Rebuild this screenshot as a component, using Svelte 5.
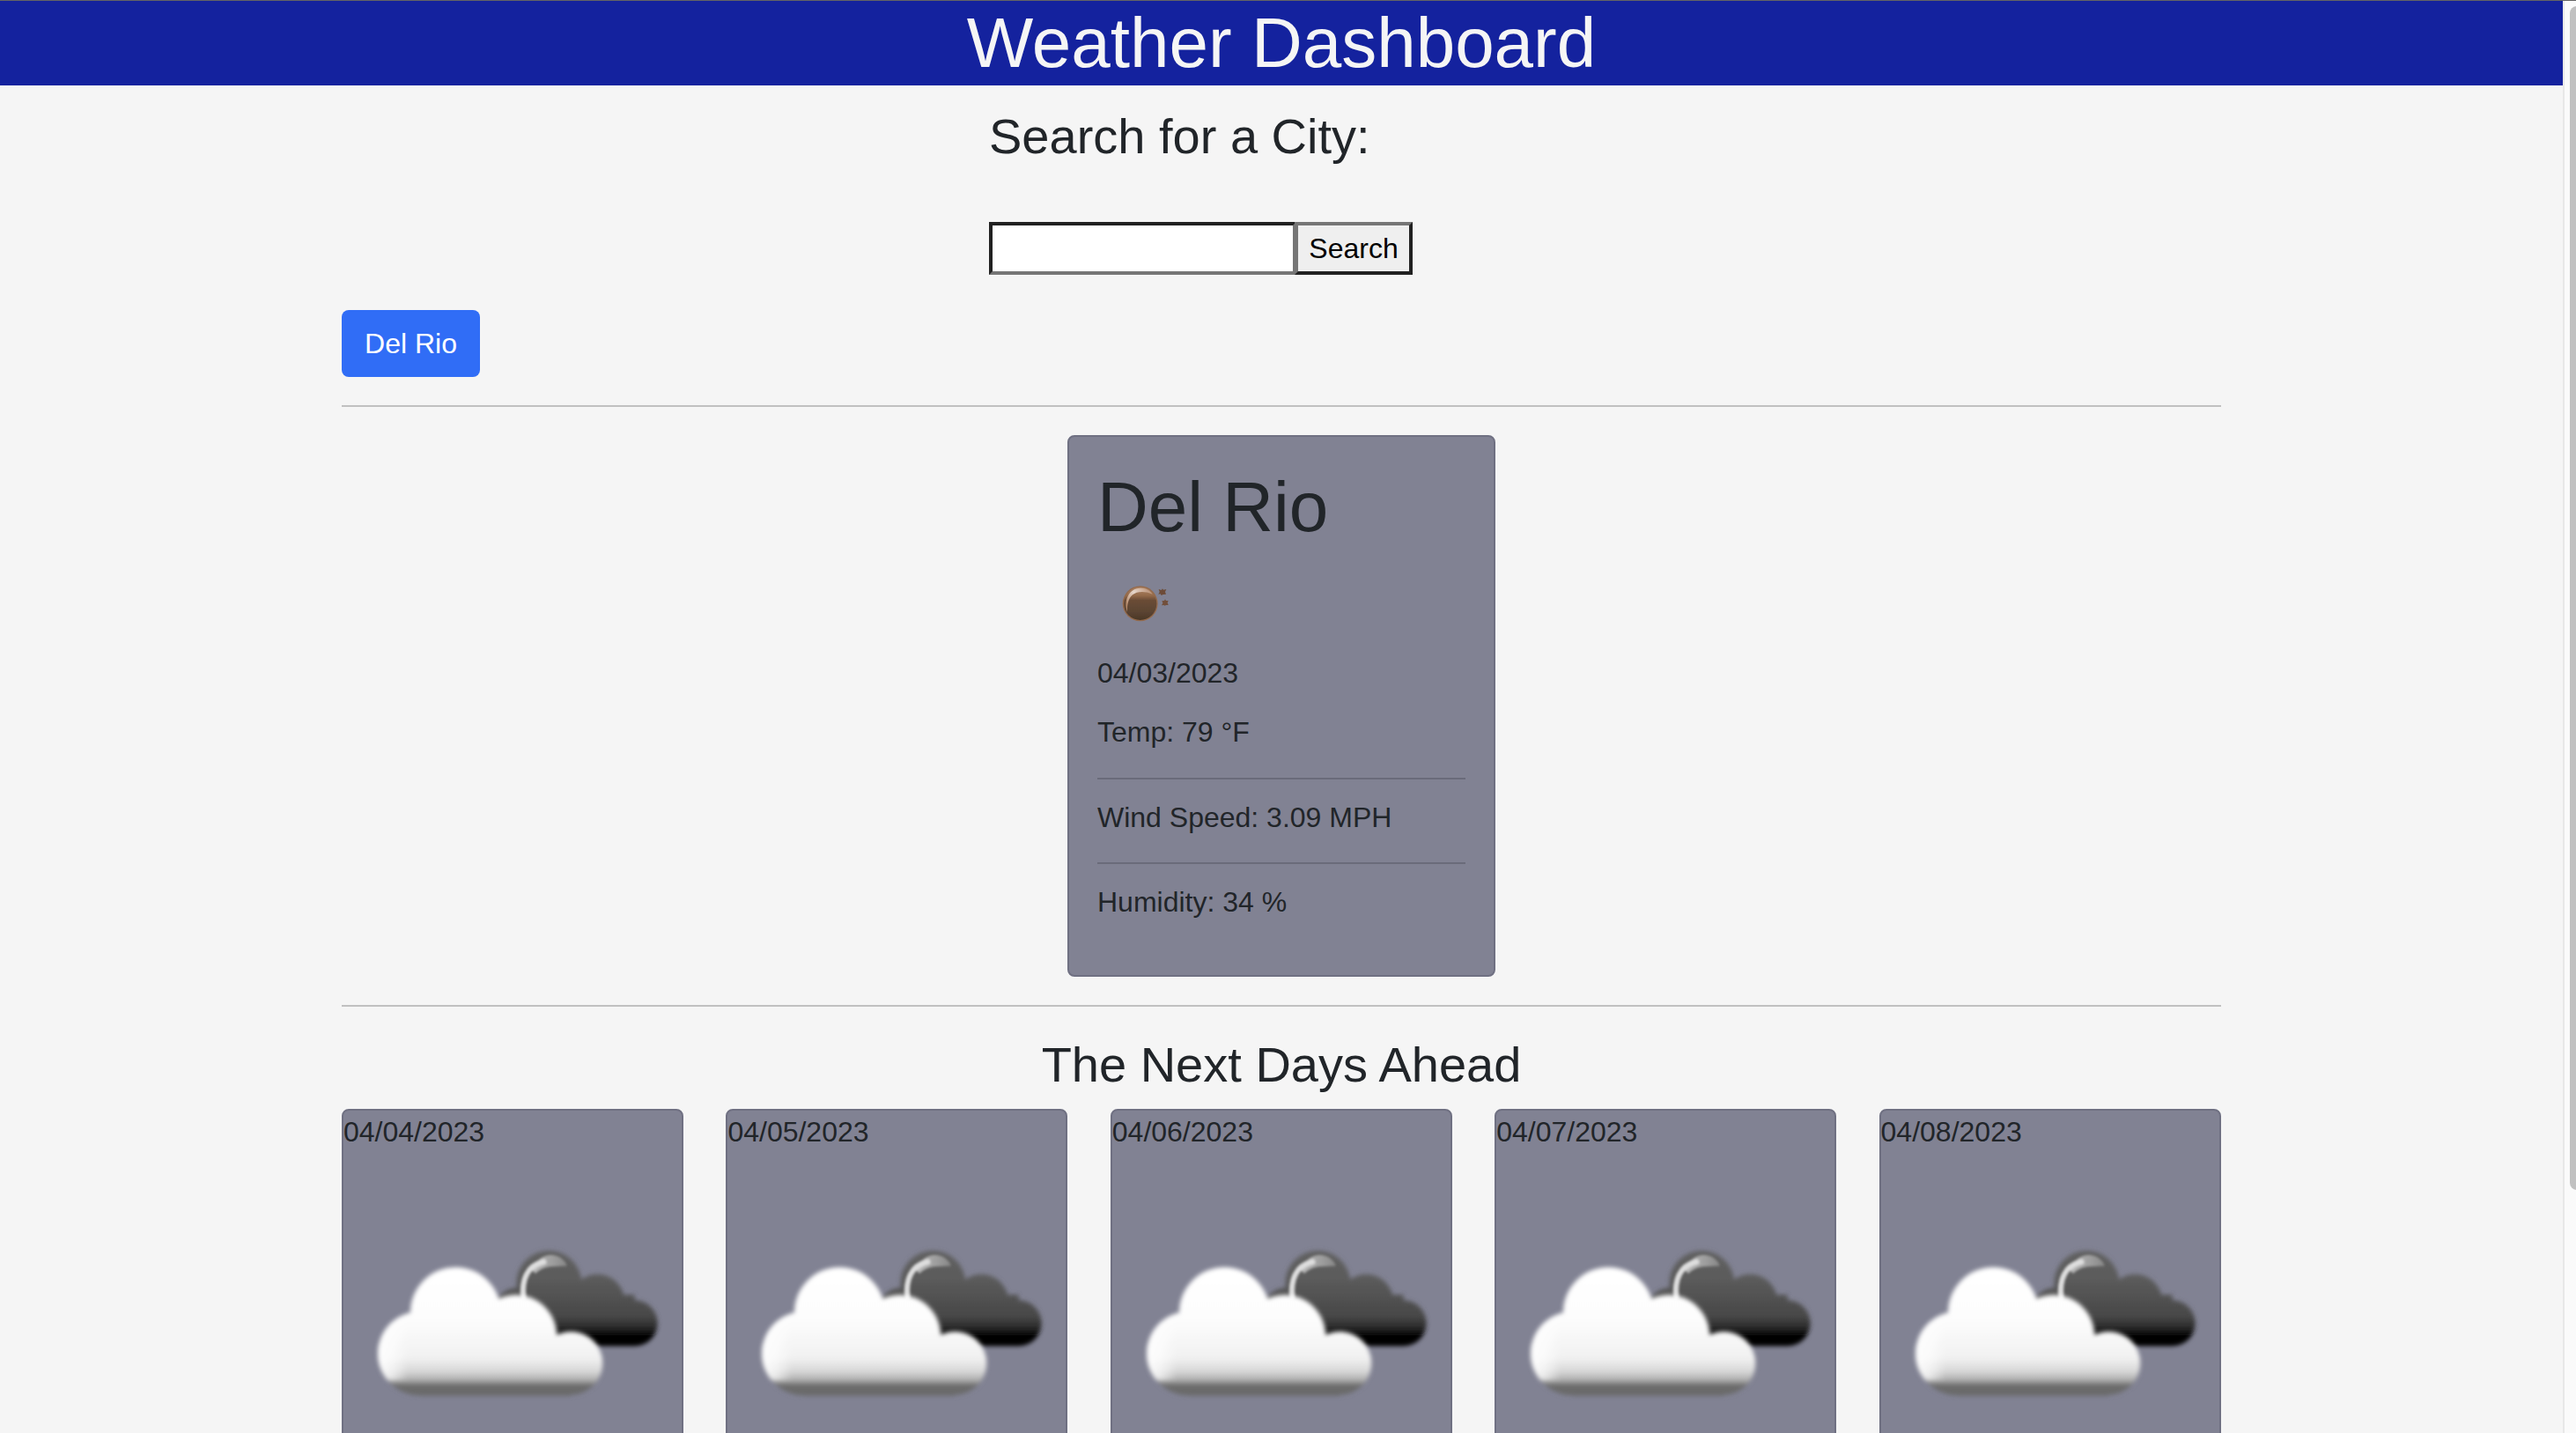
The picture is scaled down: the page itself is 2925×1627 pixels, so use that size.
<script lang="ts">
  const current = {
    city: 'Del Rio',
    date: '04/03/2023',
    temp: 'Temp: 79 °F',
    wind: 'Wind Speed: 3.09 MPH',
    humidity: 'Humidity: 34 %',
  };
  const history = ['Del Rio'];
  const forecast = ['04/04/2023', '04/05/2023', '04/06/2023', '04/07/2023', '04/08/2023'];
  let query = $state('');
</script>

<div class="viewport">
  <div class="page">
    <header><h1>Weather Dashboard</h1></header>

    <main>
      <section class="search">
        <h3>Search for a City:</h3>
        <div class="controls">
          <input type="text" aria-label="City" bind:value={query} />
          <button type="button">Search</button>
        </div>
      </section>

      <div class="history">
        {#each history as city}
          <button type="button">{city}</button>
        {/each}
      </div>

      <hr class="rule" />

      <article class="card current">
        <h1>{current.city}</h1>
        <svg class="icon" viewBox="-12 0 300 300" aria-hidden="true">
          <defs>
            <linearGradient id="moon" x1="0" y1="0" x2="0" y2="1">
              <stop offset="0" stop-color="#b08768" />
              <stop offset="0.25" stop-color="#946a4a" />
              <stop offset="0.4" stop-color="#6a4c36" />
              <stop offset="0.75" stop-color="#5b4432" />
              <stop offset="1" stop-color="#4a3726" />
            </linearGradient>
            <linearGradient id="moonShine" x1="0" y1="0.6" x2="1" y2="0">
              <stop offset="0" stop-color="#b98f70" />
              <stop offset="0.4" stop-color="#e6d6cb" />
              <stop offset="1" stop-color="#b28466" />
            </linearGradient>
            <filter id="moonSoft"><feGaussianBlur stdDeviation="2.2" /></filter>
          </defs>
          <g filter="url(#moonSoft)">
            <circle cx="134" cy="136" r="60" fill="#946a4c" />
            <circle cx="134" cy="136" r="56" fill="url(#moon)" />
            <path
              d="M90 164 C78 128 92 84 136 83 C156 83 168 92 176 104 C148 92 122 95 108 106 C93 120 89 140 90 164Z"
              fill="url(#moonShine)"
            />
            <path
              d="M197 87l9 3 4-5 3 4 10-2-4 9 3 8-10 1-6 3-3-5-7 1 4-8z"
              fill="#6d4c38"
            />
            <path
              d="M208 127l8-1 3-5 3 5 8 0-3 7 3 8-8 0-4 2-4-2-7 1 4-8z"
              fill="#72503b"
            />
          </g>
        </svg>
        <p class="date">{current.date}</p>
        <p>{current.temp}</p>
        <hr />
        <p>{current.wind}</p>
        <hr class="last" />
        <p>{current.humidity}</p>
      </article>

      <hr class="rule" />

      <h3 class="ahead">The Next Days Ahead</h3>

      <div class="forecast">
        {#each forecast as day}
          <article class="card day">
            <p>{day}</p>
            <svg viewBox="30 207 1152 1152" aria-hidden="true">
              <use href="#brokenClouds" />
            </svg>
          </article>
        {/each}
      </div>
    </main>
  </div>
  <div class="scrollbar"><div class="thumb"></div></div>
</div>

<!-- Shared artwork for the forecast icons -->
<svg class="defs" aria-hidden="true">
  <defs>
    <linearGradient id="dark" gradientUnits="userSpaceOnUse" x1="0" y1="535" x2="0" y2="870">
      <stop offset="0" stop-color="#606060" />
      <stop offset="0.3" stop-color="#5b5b5b" />
      <stop offset="0.68" stop-color="#484848" />
      <stop offset="0.79" stop-color="#2c2c2c" />
      <stop offset="0.87" stop-color="#050505" />
      <stop offset="1" stop-color="#000" />
    </linearGradient>
    <linearGradient id="light" gradientUnits="userSpaceOnUse" x1="0" y1="590" x2="0" y2="1040">
      <stop offset="0" stop-color="#fff" />
      <stop offset="0.4" stop-color="#fdfdfd" />
      <stop offset="0.7" stop-color="#f1f1f1" />
      <stop offset="0.8" stop-color="#d8d8d8" />
      <stop offset="0.865" stop-color="#b0b0b0" />
      <stop offset="0.91" stop-color="#6b6b6b" />
      <stop offset="1" stop-color="#696969" />
    </linearGradient>
    <linearGradient id="cap" gradientUnits="userSpaceOnUse" x1="680" y1="0" x2="805" y2="0">
      <stop offset="0" stop-color="#b8b8b8" />
      <stop offset="0.6" stop-color="#989898" />
      <stop offset="1" stop-color="#808080" />
    </linearGradient>
    <linearGradient id="edge" gradientUnits="userSpaceOnUse" x1="145" y1="0" x2="250" y2="0">
      <stop offset="0" stop-color="#fff" stop-opacity="0.9" />
      <stop offset="0.5" stop-color="#fff" stop-opacity="0.6" />
      <stop offset="1" stop-color="#fff" stop-opacity="0" />
    </linearGradient>
    <clipPath id="frontClip"><rect x="120" y="560" width="830" height="474" /></clipPath>
    <clipPath id="edgeClip"><rect x="120" y="740" width="150" height="240" /></clipPath>
    <filter id="soft" x="-5%" y="-5%" width="110%" height="110%">
      <feGaussianBlur stdDeviation="8" />
    </filter>
    <filter id="shineSoft" x="-20%" y="-20%" width="140%" height="140%">
      <feGaussianBlur stdDeviation="4" />
    </filter>
    <g id="brokenClouds">
      <g filter="url(#soft)" fill="url(#dark)">
        <circle cx="730" cy="651" r="111" />
        <circle cx="895" cy="712" r="92" />
        <circle cx="1022" cy="787" r="78" />
        <circle cx="620" cy="740" r="74" />
        <rect x="640" y="690" width="382" height="175" />
      </g>
      <g filter="url(#shineSoft)">
        <path
          d="M672 606 C688 572 708 555 736 554 C762 554 784 570 792 592 L740 594 C716 595 700 604 684 618Z"
          fill="url(#cap)"
        />
        <path
          d="M643 700 C637 645 652 592 712 578"
          fill="none"
          stroke="#dedede"
          stroke-width="19"
          stroke-linecap="round"
        />
      </g>
      <g filter="url(#soft)">
        <g clip-path="url(#frontClip)" fill="url(#light)">
          <circle cx="290" cy="890" r="143" />
          <circle cx="412" cy="750" r="154" />
          <circle cx="618" cy="830" r="139" />
          <circle cx="805" cy="923" r="108" />
          <rect x="290" y="830" width="515" height="210" />
        </g>
        <circle cx="290" cy="890" r="143" fill="url(#edge)" clip-path="url(#edgeClip)" />
      </g>
    </g>
  </defs>
</svg>

<style>
  :global(body) {
    background: #f5f5f5;
    overflow: hidden;
  }
  .viewport {
    display: flex;
    box-sizing: border-box;
    width: 2925px;
    height: 1627px;
    overflow: hidden;
    border-top: 1px solid #646464;
    background: #f5f5f5;
    color: #212529;
    font-family: 'Liberation Sans', Arial, sans-serif;
    font-size: 32px;
    line-height: 48px;
  }
  .page {
    width: 2910px;
    flex: none;
  }
  h1,
  h3,
  p {
    margin: 0;
    font-weight: 400;
  }
  h1 {
    font-size: 80px;
    line-height: 96px;
  }
  h3 {
    font-size: 56px;
    line-height: 67px;
  }
  header {
    background: #14229e;
    color: #f5f5f5;
    text-align: center;
  }
  main {
    width: 2134px;
    margin: 0 auto;
  }
  .search {
    padding: 24px 0 0 735px;
  }
  .controls {
    display: flex;
    height: 60px;
    margin-top: 64px;
  }
  .controls input {
    box-sizing: border-box;
    width: 349px;
    margin: 0;
    padding: 2px 4px;
    border: 4px solid;
    border-color: #212121 #767676 #767676 #212121;
    border-radius: 0;
    background: #fff;
    font: inherit;
    outline: none;
  }
  .controls button {
    box-sizing: border-box;
    width: 134px;
    margin: 0 0 0 -2px;
    padding: 0;
    border: 4px solid;
    border-color: #767676 #212121 #212121 #767676;
    border-radius: 0;
    background: #efefef;
    color: #000;
    font: inherit;
  }
  .history {
    display: flex;
    margin-top: 40px;
  }
  .history button {
    width: 157px;
    height: 76px;
    padding: 0;
    border: 0;
    border-radius: 8px;
    background: #306df6;
    color: #fff;
    font: inherit;
  }
  hr {
    height: 2px;
    border: 0;
    background: #6a6b7a;
  }
  .rule {
    margin: 32px 0;
    background: #c0c0c0;
  }
  .card {
    box-sizing: border-box;
    border: 2px solid #6f7082;
    border-radius: 8px;
    background: #818293;
  }
  .current {
    width: 486px;
    height: 615px;
    margin: 0 auto;
    padding: 32px;
  }
  .current .icon {
    display: block;
    width: 100px;
    height: 100px;
    margin-top: 16px;
  }
  .current .date {
    margin-bottom: 19px;
  }
  .current hr {
    margin: 28px 0 19px;
  }
  .current hr.last {
    margin: 27px 0 19px;
  }
  .ahead {
    text-align: center;
  }
  .forecast {
    display: flex;
    gap: 48.4px;
    margin-top: 17px;
  }
  .day {
    width: 388px;
    height: 900px;
    flex: none;
  }
  .day svg {
    display: block;
    width: 384px;
    height: 384px;
  }
  .scrollbar {
    box-sizing: border-box;
    width: 15px;
    flex: none;
    padding: 6px 0 0 6px;
    border-left: 2px solid #e8e8e8;
    background: #fafafa;
  }
  .thumb {
    width: 16px;
    height: 1344px;
    border-radius: 8px;
    background: #c1c1c1;
  }
  .defs {
    position: absolute;
    width: 0;
    height: 0;
  }
</style>
